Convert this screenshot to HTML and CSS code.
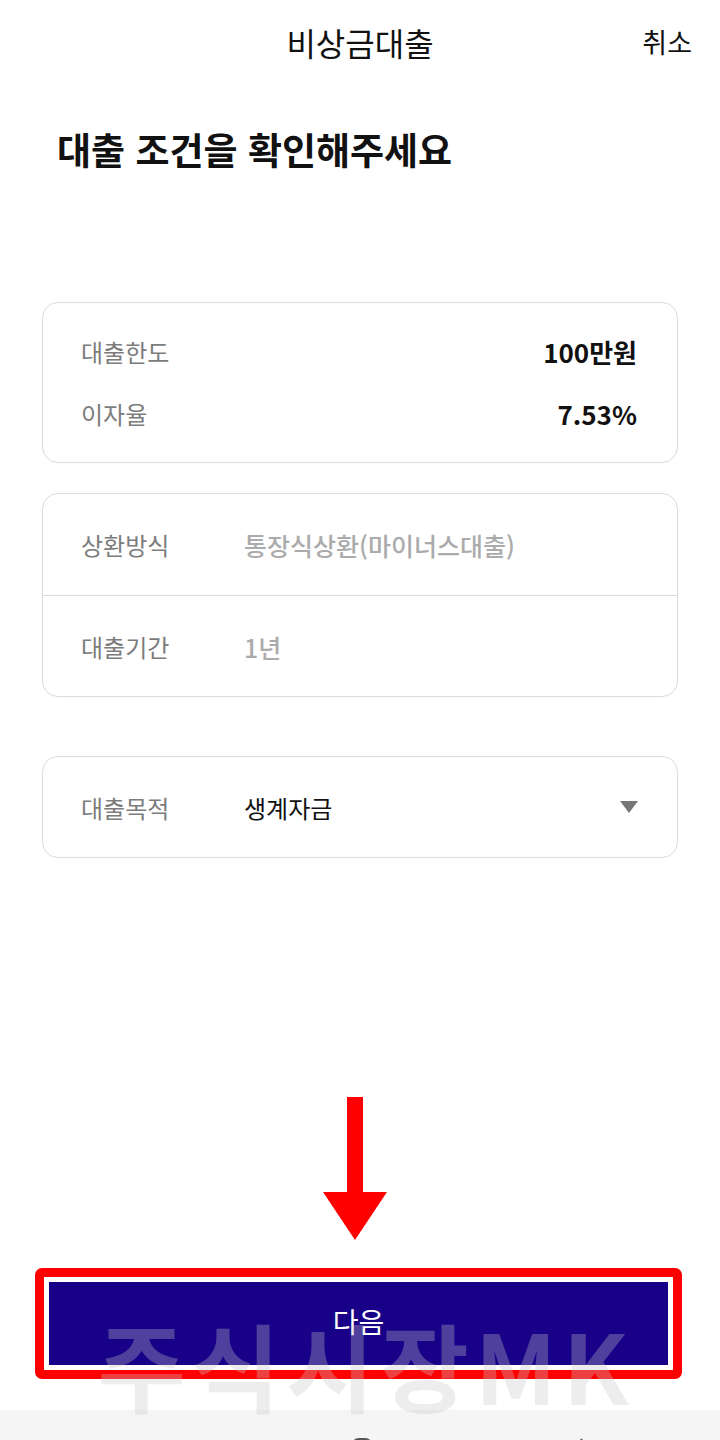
FILE: index.html
```html
<!DOCTYPE html>
<html lang="ko">
<head>
    <meta charset="UTF-8">
    <meta name="viewport" content="width=device-width, initial-scale=1.0">
    <title>비상금대출</title>
    <link rel="stylesheet" href="styles.css">
</head>
<body>
    <div class="page">
        <header class="top-bar">
            <span></span>
            <h1 class="top-title">비상금대출</h1>
            <a class="cancel" href="#">취소</a>
        </header>

        <h2 class="headline">대출 조건을 확인해주세요</h2>

        <div class="card card-summary">
            <div class="summary-row">
                <span class="label">대출한도</span>
                <span class="amount">100만원</span>
            </div>
            <div class="summary-row">
                <span class="label">이자율</span>
                <span class="amount">7.53%</span>
            </div>
        </div>

        <div class="card card-terms">
            <div class="term-row">
                <span class="label">상환방식</span>
                <span class="term-value">통장식상환(마이너스대출)</span>
            </div>
            <div class="term-row">
                <span class="label">대출기간</span>
                <span class="term-value">1년</span>
            </div>
        </div>

        <div class="card card-select">
            <span class="label">대출목적</span>
            <span class="select-value">생계자금</span>
            <span class="caret"></span>
        </div>

        <svg class="pointer" width="64" height="143" viewBox="0 0 64 143">
            <rect x="24" y="0" width="16" height="98" fill="#ff0000"/>
            <polygon points="0,95 64,95 32,143" fill="#ff0000"/>
        </svg>

        <div class="cta-frame">
            <button class="cta" type="button">다음</button>
        </div>

        <nav class="sys-nav">
            <svg width="26" height="20" viewBox="0 0 26 20"><g stroke="#555" stroke-width="2"><line x1="4" y1="3" x2="4" y2="20"/><line x1="13" y1="3" x2="13" y2="20"/><line x1="22" y1="3" x2="22" y2="20"/></g></svg>
            <svg width="24" height="24" viewBox="0 0 24 24"><rect x="2" y="2" width="20" height="20" rx="7" fill="none" stroke="#555" stroke-width="2"/></svg>
            <svg width="14" height="24" viewBox="0 0 14 24"><polyline points="11,2 3,12 11,22" fill="none" stroke="#555" stroke-width="2"/></svg>
        </nav>

        <div class="watermark">주식시장MK</div>
    </div>
</body>
</html>
```

FILE: styles.css
```css
body {
    margin: 0;
    background-color: #ffffff;
    font-family: "Noto Sans CJK KR", "Noto Sans", sans-serif;
    color: #111111;
}

.page {
    position: relative;
    width: 720px;
    height: 1440px;
    overflow: hidden;
    display: flex;
    flex-direction: column;
}

.top-bar {
    height: 85px;
    display: grid;
    grid-template-columns: 1fr auto 1fr;
    align-items: center;
    padding: 0 28px;
}

.top-title {
    margin: 0;
    font-size: 32px;
    font-weight: 400;
    line-height: 1;
    padding-bottom: 2px;
}

.cancel {
    justify-self: end;
    font-size: 27px;
    color: #111111;
    text-decoration: none;
    line-height: 1;
    padding-bottom: 2px;
}

.headline {
    margin: 38px 0 0 57px;
    height: 52px;
    font-size: 37px;
    font-weight: 700;
    line-height: 52px;
}

.card {
    margin: 0 42px;
    border: 1px solid #dcdcdc;
    border-radius: 16px;
    box-sizing: border-box;
}

.label {
    font-size: 24px;
    color: #7c7c7c;
}

.card-summary {
    margin-top: 127px;
    height: 161px;
    padding: 17px 40px 20px 38px;
}

.summary-row {
    height: 62px;
    display: flex;
    justify-content: space-between;
    align-items: center;
}

.amount {
    font-size: 26px;
    font-weight: 700;
    color: #111111;
}

.card-terms {
    margin-top: 30px;
    height: 204px;
}

.term-row {
    height: 101px;
    display: flex;
    align-items: center;
    padding: 0 38px;
}

.term-row + .term-row {
    border-top: 1px solid #dcdcdc;
}

.term-row .label,
.card-select .label {
    width: 163px;
}

.term-value {
    font-size: 25px;
    font-weight: 500;
    color: #ababab;
}

.card-select {
    margin-top: 59px;
    height: 102px;
    display: flex;
    align-items: center;
    padding: 0 39px 0 38px;
}

.select-value {
    flex: 1;
    font-size: 24px;
    color: #111111;
}

.caret {
    width: 0;
    height: 0;
    border-left: 9.5px solid transparent;
    border-right: 9.5px solid transparent;
    border-top: 12px solid #777777;
}

.pointer {
    display: block;
    margin: 239px 0 0 323px;
}

.cta-frame {
    margin: 28px 38px 0 35px;
    border: 9px solid #ff0000;
    border-radius: 7px;
    padding: 5px;
    background-color: #ffffff;
}

.cta {
    display: block;
    width: 100%;
    height: 83px;
    border: none;
    background-color: #190089;
    color: #ffffff;
    font-family: inherit;
    font-size: 28px;
    padding: 0 0 6px;
}

.sys-nav {
    margin-top: 31px;
    height: 30px;
    background-color: #f5f5f5;
    display: flex;
    align-items: flex-start;
    padding-top: 27px;
    box-sizing: border-box;
    overflow: hidden;
}

.sys-nav svg:nth-child(1) {
    margin-left: 147px;
}

.sys-nav svg:nth-child(2) {
    margin-left: 177px;
}

.sys-nav svg:nth-child(3) {
    margin-left: 197px;
}

.watermark {
    position: absolute;
    left: 0;
    right: 0;
    top: 1316px;
    padding-left: 12px;
    text-align: center;
    font-size: 96px;
    font-weight: 700;
    line-height: 1;
    letter-spacing: 6px;
    color: rgba(200, 200, 200, 0.32);
    pointer-events: none;
}
```
